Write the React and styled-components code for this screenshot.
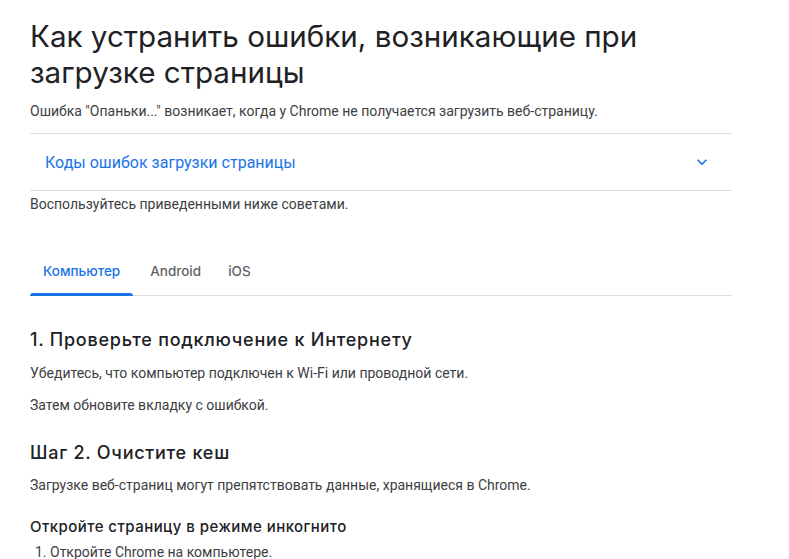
import React from "react";
import styled, { createGlobalStyle } from "styled-components";

const Global = createGlobalStyle`
  html, body { margin: 0; padding: 0; background: #fff; }
  body { font-family: Roboto, "Noto Sans", Arial, sans-serif; color: #3c4043; }
`;

const Page = styled.main`
  width: 702px;
  padding: 18px 0 0 30px;
`;

const Title = styled.h1`
  margin: 0;
  font-family: Inter, "Open Sans", sans-serif;
  font-weight: 400;
  font-size: 29.6px;
  line-height: 36px;
  color: #202124;
`;

const Text = styled.p`
  margin: ${(p) => p.$mt || 0}px 0 0;
  font-size: 14px;
  line-height: 20px;
  color: #3c4043;
`;

const Accordion = styled.div`
  margin-top: 12px;
  border-top: 1px solid #dadce0;
  border-bottom: 1px solid #dadce0;
  height: 56px;
  display: flex;
  align-items: center;
  justify-content: space-between;
  padding: 0 20px 0 15px;
`;

const AccordionTitle = styled.span`
  font-size: 16px;
  color: #1a73e8;
`;

const Chevron = styled.svg`
  width: 20px;
  height: 20px;
  fill: #1a73e8;
`;

const Tabs = styled.nav`
  margin-top: 33px;
  display: flex;
  border-bottom: 1px solid #dadce0;
`;

const Tab = styled.div`
  position: relative;
  padding: 0 13px 0 ${(p) => p.$pl || 13}px;
  height: 48px;
  display: flex;
  align-items: center;
  font-family: Inter, "Open Sans", sans-serif;
  font-size: 13.5px;
  font-weight: 500;
  color: ${(p) => (p.$active ? "#1a73e8" : "#5f6368")};
  &::after {
    content: "";
    display: ${(p) => (p.$active ? "block" : "none")};
    position: absolute;
    left: 0;
    right: 0;
    bottom: -1px;
    height: 3px;
    background: #1a73e8;
    border-radius: 3px 3px 0 0;
  }
`;

const H2 = styled.h2`
  margin: ${(p) => p.$mt}px 0 0;
  font-family: Inter, "Open Sans", sans-serif;
  font-weight: 500;
  font-size: 18px;
  letter-spacing: 0.75px;
  line-height: 24px;
  color: #202124;
`;

const H3 = styled.h3`
  margin: ${(p) => p.$mt}px 0 0;
  font-family: Inter, "Open Sans", sans-serif;
  font-weight: 500;
  font-size: 15px;
  letter-spacing: 0.45px;
  line-height: 22px;
  color: #202124;
`;

const List = styled.ol`
  margin: 4px 0 0;
  padding-left: 20px;
  font-size: 14px;
  line-height: 20px;
  color: #3c4043;
`;

export default function App() {
  return (
    <>
      <Global />
      <Page>
        <Title>Как устранить ошибки, возникающие при загрузке страницы</Title>
        <Text $mt={11}>Ошибка "Опаньки..." возникает, когда у Chrome не получается загрузить веб-страницу.</Text>
        <Accordion>
          <AccordionTitle>Коды ошибок загрузки страницы</AccordionTitle>
          <Chevron viewBox="0 0 24 24">
            <path d="M7.41 8.59 12 13.17l4.59-4.58L18 10l-6 6-6-6 1.41-1.41z" />
          </Chevron>
        </Accordion>
        <Text $mt={3}>Воспользуйтесь приведенными ниже советами.</Text>
        <Tabs>
          <Tab $active>Компьютер</Tab>
          <Tab $pl={17}>Android</Tab>
          <Tab $pl={14}>iOS</Tab>
        </Tabs>
        <H2 $mt={32}>1. Проверьте подключение к Интернету</H2>
        <Text $mt={11}>Убедитесь, что компьютер подключен к Wi-Fi или проводной сети.</Text>
        <Text $mt={12}>Затем обновите вкладку с ошибкой.</Text>
        <H2 $mt={26}>Шаг 2. Очистите кеш</H2>
        <Text $mt={10}>Загрузке веб-страниц могут препятствовать данные, хранящиеся в Chrome.</Text>
        <H3 $mt={21}>Откройте страницу в режиме инкогнито</H3>
        <List>
          <li>Откройте Chrome на компьютере.</li>
        </List>
      </Page>
    </>
  );
}
